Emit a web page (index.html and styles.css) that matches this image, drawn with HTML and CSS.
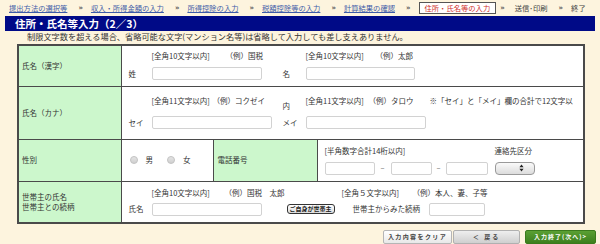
FILE: index.html
```html
<!DOCTYPE html>
<html lang="ja">

<head>
    <meta charset="UTF-8">
    <meta name="viewport" content="width=device-width, initial-scale=1.0">
    <title>住所・氏名等入力</title>
    <link rel="stylesheet" href="styles.css">
</head>

<body>

    <div class="steps">
        <a href="#">提出方法の選択等</a><span class="sep">»</span>
        <a href="#">収入・所得金額の入力</a><span class="sep">»</span>
        <a href="#">所得控除の入力</a><span class="sep">»</span>
        <a href="#">税額控除等の入力</a><span class="sep">»</span>
        <a href="#">計算結果の確認</a><span class="sep">»</span>
        <span class="current">住所・氏名等の入力</span><span class="sep near">»</span>
        <span class="plain">送信･印刷</span><span class="sep">»</span>
        <span class="plain">終了</span>
    </div>

    <h1 class="title">住所・氏名等入力（2／3）</h1>
    <p class="notice">制限文字数を超える場合、省略可能な文字(マンション名等)は省略して入力しても差し支えありません。</p>

    <table class="form">
        <colgroup>
            <col class="c-label">
            <col class="c-sex">
            <col class="c-tel">
            <col class="c-rest">
        </colgroup>
        <tr class="r-kanji">
            <th>氏名（漢字）</th>
            <td colspan="3">
                <div class="name-grid">
                    <span></span>
                    <span class="hint"><span class="req w74">[全角10文字以内]</span>（例）国税</span>
                    <span></span>
                    <span class="hint"><span class="req w70">[全角10文字以内]</span>（例）太郎</span>
                    <span class="lbl">姓</span>
                    <span><input type="text" class="box w110"></span>
                    <span class="lbl">名</span>
                    <span><input type="text" class="box w109"></span>
                </div>
            </td>
        </tr>
        <tr class="r-kana">
            <th>氏名（カナ）</th>
            <td colspan="3">
                <div class="name-grid kana">
                    <span></span>
                    <span class="hint"><span class="req w61">[全角11文字以内]</span>（例）コクゼイ</span>
                    <span class="wrap">内</span>
                    <span class="hint"><span class="req w63">[全角11文字以内]</span><span class="req w61">（例）タロウ</span>※「セイ」と「メイ」欄の合計で12文字以</span>
                    <span class="lbl">セイ</span>
                    <span><input type="text" class="box w120"></span>
                    <span class="lbl">メイ</span>
                    <span><input type="text" class="box w120"></span>
                </div>
            </td>
        </tr>
        <tr class="r-sex">
            <th>性別</th>
            <td>
                <div class="radios">
                    <input type="radio" name="sex" class="radio"><span class="opt">男</span>
                    <input type="radio" name="sex" class="radio"><span class="opt">女</span>
                </div>
            </td>
            <th class="tel-label">電話番号</th>
            <td>
                <div class="tel-grid">
                    <span class="hint span5">[半角数字合計14桁以内]</span>
                    <span class="hint col7">連絡先区分</span>
                    <input type="text" class="box">
                    <span class="dash">–</span>
                    <input type="text" class="box">
                    <span class="dash">–</span>
                    <input type="text" class="box">
                    <span></span>
                    <div class="select">
                        <svg width="5" height="8" viewBox="0 0 5 8">
                            <path d="M2.5 0.5 L4.6 3.3 L0.4 3.3 Z M2.5 7.5 L4.6 4.7 L0.4 4.7 Z" fill="#222" />
                        </svg>
                    </div>
                </div>
            </td>
        </tr>
        <tr class="r-head">
            <th>世帯主の氏名<br>世帯主との続柄</th>
            <td colspan="3">
                <div class="head-row">
                    <span class="hint"><span class="req w73">[全角10文字以内]</span>（例）国税　太郎</span>
                    <span class="hint rel-hint"><span class="req w71">[全角５文字以内]</span>（例）本人、妻、子等</span>
                </div>
                <div class="head-row inputs">
                    <span class="lbl">氏名</span>
                    <input type="text" class="box w110">
                    <button class="self-btn">ご自身が世帯主</button>
                    <span class="rel-label">世帯主からみた続柄</span>
                    <input type="text" class="box w56">
                </div>
            </td>
        </tr>
    </table>

    <div class="actions">
        <button class="act clear">入力内容をクリア</button>
        <button class="act back">＜ 戻る</button>
        <button class="act next">入力終了(次へ)&gt;</button>
    </div>

</body>

</html>
```

FILE: styles.css
```css
body {
    margin: 0;
    background-color: #fdf4de;
    font-family: "Noto Sans CJK JP", "Noto Sans", sans-serif;
    font-size: 7.5px;
    color: #333;
}

/* breadcrumb */
.steps {
    display: flex;
    align-items: center;
    height: 16px;
    padding-left: 9px;
    line-height: 10px;
    font-size: 7.3px;
    white-space: nowrap;
}

.steps > * {
    flex-shrink: 0;
}

.steps a {
    color: #3d5ca8;
}

.steps .plain {
    color: #444;
}

.sep {
    margin: 0 8px 0 11px;
    color: #555;
    font-weight: bold;
    font-family: "DejaVu Sans", sans-serif;
    font-size: 7px;
}

.sep.near {
    margin-left: 4px;
    margin-right: 10px;
}

.current {
    color: #d0302c;
    background-color: #fff;
    border: 1px solid #555;
    padding: 0 5px;
}

.title {
    margin: 0 5px;
    height: 15px;
    line-height: 15px;
    background-color: #000a87;
    color: #fff;
    font-size: 10.5px;
    font-weight: bold;
    padding-left: 10px;
}

.notice {
    margin: 0;
    height: 13px;
    line-height: 11px;
    padding-left: 27px;
    font-size: 8.2px;
}

/* form table */
.form {
    margin-left: 17px;
    width: 566px;
    border-collapse: collapse;
    table-layout: fixed;
    border: 2px solid #4a4a4a;
}

.c-label { width: 103px; }
.c-sex { width: 92px; }
.c-tel { width: 104px; }
.c-rest { width: 267px; }

.form th,
.form td {
    border: 1px solid #4a4a4a;
    padding: 0;
    vertical-align: middle;
    line-height: 10px;
}

.form th {
    background-color: #ccf7cc;
    text-align: left;
    font-weight: normal;
    padding-left: 3px;
}

.form td {
    background-color: #fff;
}

.form th.tel-label {
    padding-left: 4px;
}

.r-kanji { height: 41px; }
.r-kana { height: 53px; }
.r-sex { height: 42px; }
.r-head { height: 42px; }

.hint {
    white-space: nowrap;
}

.req {
    display: inline-block;
}

.w61 { width: 61px; }
.w63 { width: 63px; }
.w70 { width: 70px; }
.w71 { width: 71px; }
.w73 { width: 73px; }
.w74 { width: 74px; }

.box {
    display: block;
    box-sizing: border-box;
    height: 13px;
    margin: 0;
    padding: 0;
    border: 1px solid #d2d2d2;
    border-radius: 2px;
    background-color: #fff;
}

.box.w110 { width: 110px; }
.box.w109 { width: 109px; }
.box.w120 { width: 120px; }
.box.w56 { width: 56px; }

.name-grid {
    display: grid;
    grid-template-columns: 23px 131px 23px 1fr;
    row-gap: 6px;
    padding-left: 7px;
    align-items: center;
}

.name-grid.kana {
    row-gap: 5px;
    align-items: start;
}

.name-grid.kana .lbl {
    align-self: center;
}

.wrap {
    padding-top: 5px;
}

/* gender */
.radios {
    display: flex;
    align-items: center;
    padding-left: 8px;
}

.radio {
    appearance: none;
    width: 8px;
    height: 8px;
    margin: 0;
    border-radius: 50%;
    border: 1px solid #c4c4c4;
    background: linear-gradient(#e4e4e4, #cfcfcf);
}

.opt {
    margin: 0 14px 0 8px;
}

/* phone */
.tel-grid {
    display: grid;
    grid-template-columns: 50px 16px 41px 14px 42px 7px 40px;
    row-gap: 6px;
    padding-left: 7px;
    align-items: center;
}

.span5 {
    grid-column: 1 / 6;
}

.col7 {
    grid-column: 7;
}

.tel-grid .box {
    width: 100%;
}

.dash {
    text-align: center;
    color: #555;
}

.select {
    box-sizing: border-box;
    height: 13px;
    border: 1px solid #9a9a9a;
    border-radius: 4px;
    background: linear-gradient(#fafafa, #dcdcdc);
    display: flex;
    align-items: center;
    justify-content: flex-end;
    padding-right: 10px;
}

/* head of household */
.head-row {
    display: flex;
    align-items: center;
    padding-left: 30px;
}

.rel-hint {
    margin-left: 57px;
}

.head-row.inputs {
    margin-top: 5px;
    padding-left: 7px;
}

.head-row .lbl {
    width: 23px;
}

.self-btn {
    margin-left: 25px;
    height: 10px;
    width: 48px;
    padding: 0;
    border: 1px solid #333;
    border-radius: 3px;
    background: linear-gradient(#fff, #ddd);
    font-family: inherit;
    font-size: 6px;
    font-weight: bold;
    line-height: 8px;
    color: #222;
}

.rel-label {
    margin-left: 18px;
    width: 76px;
}

/* bottom buttons */
.actions {
    display: flex;
    justify-content: flex-end;
    margin-top: 6px;
    padding-right: 4px;
}

.act {
    box-sizing: border-box;
    height: 14px;
    padding: 0;
    border-radius: 2px;
    font-family: inherit;
    font-size: 6px;
    font-weight: bold;
    letter-spacing: 1.4px;
    line-height: 12px;
}

.clear {
    width: 69px;
    border: 1px solid #b5b5b5;
    background: linear-gradient(#ffffff, #e8e8e8);
    color: #444;
}

.back {
    width: 67px;
    margin-left: 1px;
    border: 1px solid #b0b0b0;
    background: linear-gradient(#eeeeee, #cfcfcf);
    color: #444;
    letter-spacing: 2px;
}

.next {
    width: 71px;
    margin-left: 5px;
    border: 1px solid #3a7a1c;
    background: linear-gradient(#5aa033, #3c7f1e);
    color: #fff;
    letter-spacing: 1px;
}
```
